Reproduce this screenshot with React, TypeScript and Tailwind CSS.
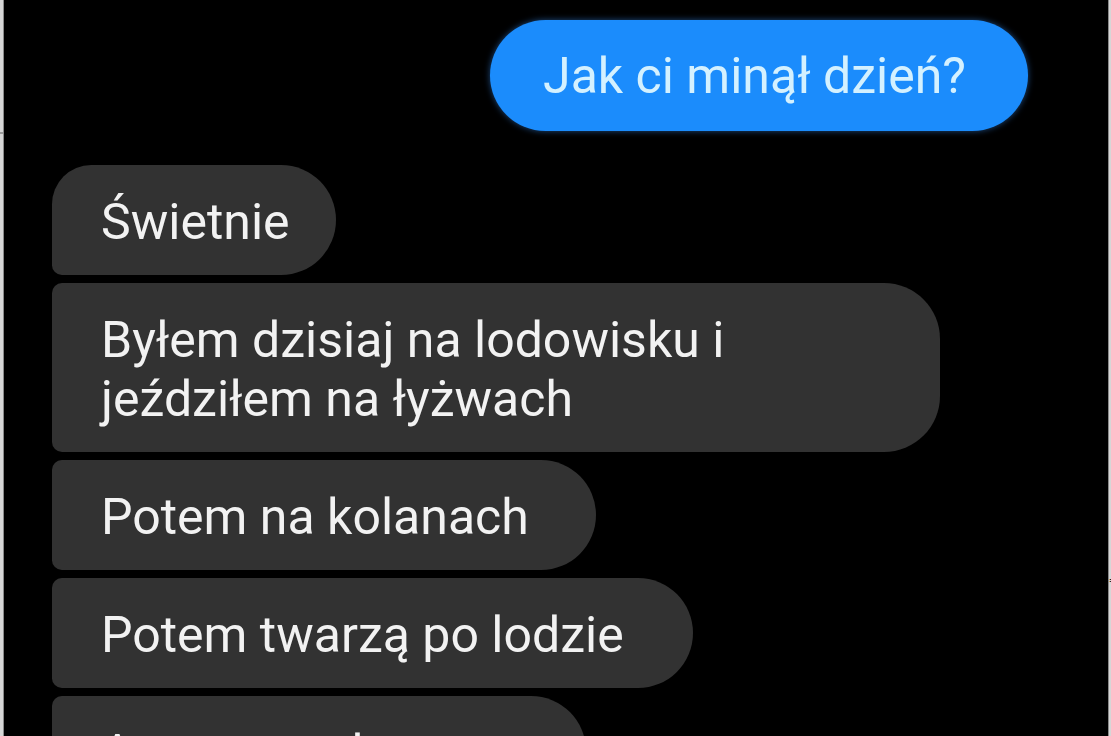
const incoming = [
  { id: 1, lines: ["Świetnie"], shape: "rounded-tl-[40px] rounded-bl-[10px] pr-[46px]" },
  {
    id: 2,
    lines: ["Byłem dzisiaj na lodowisku i", "jeździłem na łyżwach"],
    shape: "rounded-l-[10px] w-[888px]",
  },
  { id: 3, lines: ["Potem na kolanach"], shape: "rounded-l-[10px] pr-[67px]" },
  { id: 4, lines: ["Potem twarzą po lodzie"], shape: "rounded-l-[10px] pr-[69px]" },
  { id: 5, lines: ["A potem w karetce"], shape: "rounded-l-[10px] pr-[70px]" },
];

function Bubble({ lines, shape }: { lines: string[]; shape: string }) {
  return (
    <div
      className={`rounded-r-[56px] bg-[#323232] pb-[23px] pl-[49px] pt-[28px] text-[50px] leading-[59px] text-[#f2f2f2] ${shape}`}
    >
      {lines.map((line, i) => (
        <div key={i} className="whitespace-nowrap">
          {line}
        </div>
      ))}
    </div>
  );
}

export default function App() {
  return (
    <div
      className="flex h-[736px] w-[1111px] overflow-hidden bg-black"
      style={{ fontFamily: "Roboto, 'Noto Sans', sans-serif" }}
    >
      {/* left frame edge */}
      <div className="flex w-[4px] shrink-0 flex-col border-r border-[#8a8a8a] bg-[#d6d6d6]">
        <div className="mt-[132px] h-[2px] bg-[#9a9a9a]" />
      </div>

      <main className="flex min-w-0 flex-1 flex-col">
        <div className="flex justify-end pr-[80px] pt-[20px]">
          <div className="rounded-full bg-[#1b8cfc] pb-[25px] pl-[53px] pr-[62px] pt-[27px] text-[50px] leading-[59px] text-[#d4f1ff] shadow-[0_0_6px_rgba(60,150,255,0.5)]">
            Jak ci minął dzień?
          </div>
        </div>

        <div className="mt-[34px] flex flex-col items-start gap-[8px] pl-[48px]">
          {incoming.map((m) => (
            <Bubble key={m.id} lines={m.lines} shape={m.shape} />
          ))}
        </div>
      </main>

      {/* right frame edge */}
      <div className="relative w-[3px] shrink-0 border-l border-[#8a8a8a] bg-[#d6d6d6]">
        <span className="absolute left-0 top-[576px] text-[10px] leading-none text-[#222]">=</span>
      </div>
    </div>
  );
}
